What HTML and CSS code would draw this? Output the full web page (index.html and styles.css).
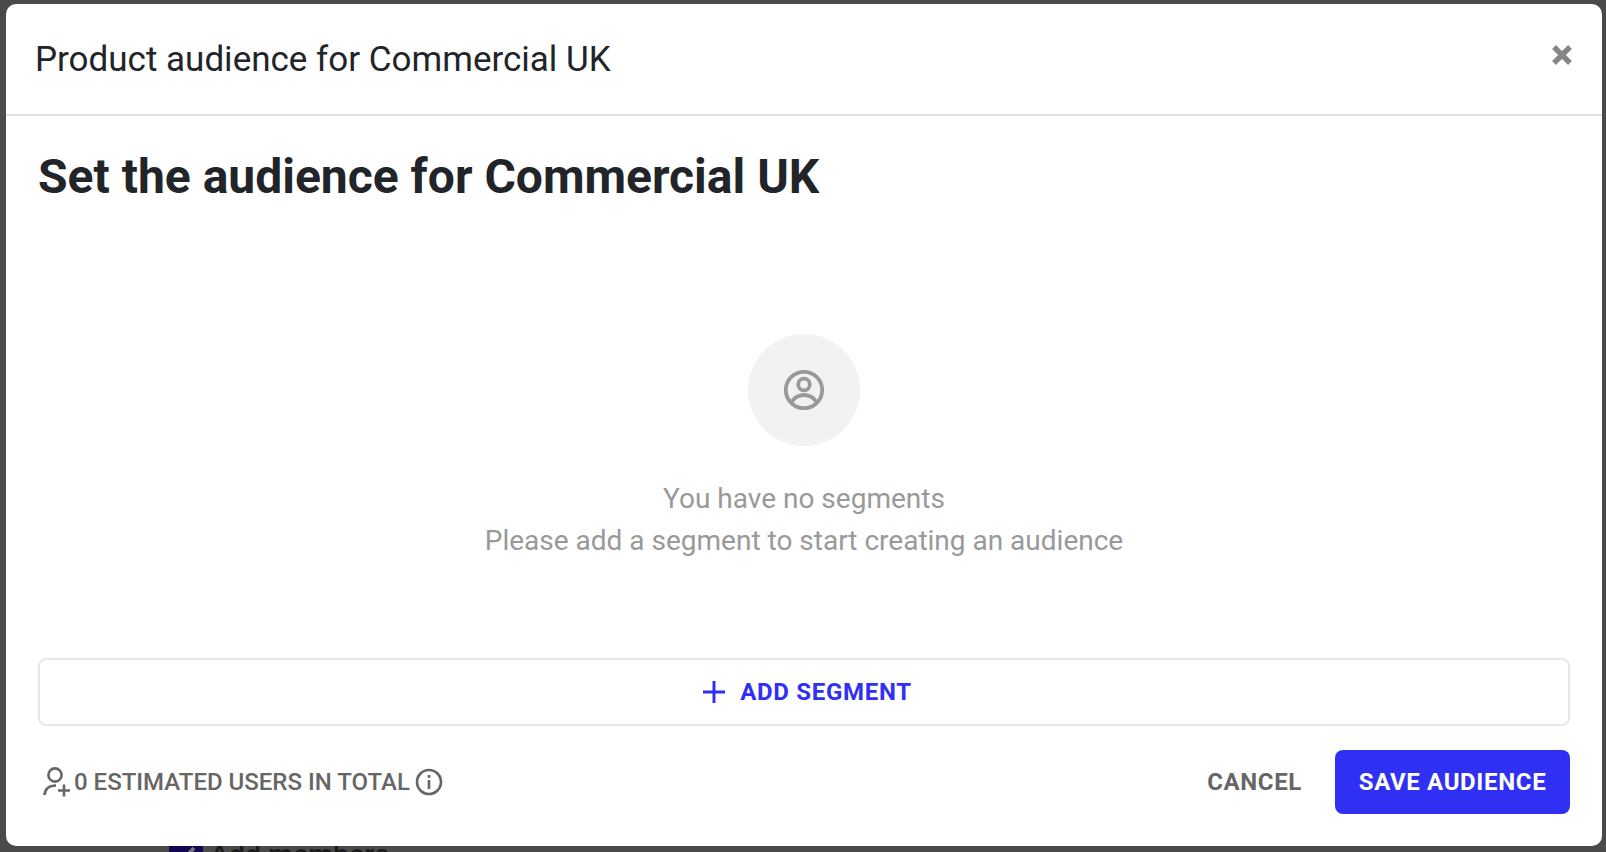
FILE: index.html
```html
<!DOCTYPE html>
<html lang="en">
<head>
    <meta charset="UTF-8">
    <meta name="viewport" content="width=device-width, initial-scale=1.0">
    <link rel="stylesheet" href="styles.css">
    <title>Product audience</title>
</head>
<body>
<div class="modal">
    <div class="modal-header">
        <div class="modal-title">Product audience for Commercial UK</div>
        <svg class="close-icon" width="24" height="24" viewBox="0 0 24 24"><path d="M4 4 L20 20 M20 4 L4 20" stroke="#868686" stroke-width="5.4" fill="none"/></svg>
    </div>
    <div class="modal-body">
        <h1 class="heading">Set the audience for Commercial UK</h1>
        <div class="empty">
            <div class="empty-circle">
                <svg width="42" height="42" viewBox="0 0 42 42" fill="none" stroke="#999" stroke-width="3.8">
                    <circle cx="21" cy="21" r="18.2"/>
                    <circle cx="21" cy="15.5" r="5.8"/>
                    <path d="M8.5 33 C12 27.5 16 26 21 26 C26 26 30 27.5 33.5 33"/>
                </svg>
            </div>
            <p class="empty-text">You have no segments<br>Please add a segment to start creating an audience</p>
        </div>
        <button class="add-segment" type="button">
            <svg width="22" height="22" viewBox="0 0 22 22"><path d="M11 0 V22 M0 11 H22" stroke="#3030f5" stroke-width="3"/></svg>
            ADD SEGMENT
        </button>
        <div class="modal-footer">
            <div class="estimate">
                <svg width="28" height="30" viewBox="0 0 28 30" fill="none" stroke="#666" stroke-width="2.6">
                    <circle cx="12" cy="8" r="6.6"/>
                    <path d="M1.5 28 C2 22 6 18.5 13 18.5"/>
                    <path d="M15 23.5 H27 M21 17.5 V29.5"/>
                </svg>
                <span>0 ESTIMATED USERS IN TOTAL</span>
                <svg class="info-icon" width="28" height="28" viewBox="0 0 28 28" fill="none" stroke="#666" stroke-width="2.6">
                    <circle cx="14" cy="14" r="12"/>
                    <path d="M14 12 V21"/>
                    <path d="M14 7 V9.8" stroke-width="2.8"/>
                </svg>
            </div>
            <div class="actions">
                <button class="btn btn-cancel" type="button">CANCEL</button>
                <button class="btn btn-save" type="button">SAVE AUDIENCE</button>
            </div>
        </div>
    </div>
</div>
<div class="behind">
    <span class="behind-check">
        <svg width="34" height="18" viewBox="0 0 34 18"><path d="M8 8 L14 14 L25 2" stroke="#777" stroke-width="4" fill="none"/></svg>
    </span>
    <span class="behind-label">Add members</span>
</div>
</body>
</html>
```
FILE: styles.css
```css
/* Global */
* {
    box-sizing: border-box;
}

html, body {
    height: 852px;
    overflow: hidden;
}

body {
    margin: 0;
    padding: 4px 4px 0 6px;
    background: #4a4a4a;
    font-family: Roboto, sans-serif;
}

/* Modal */
.modal {
    position: relative;
    z-index: 1;
    display: flex;
    flex-direction: column;
    height: 842px;
    background: #fff;
    border-radius: 10px;
}

.modal-header {
    display: flex;
    align-items: center;
    justify-content: space-between;
    height: 112px;
    padding: 0 28px 0 29px;
    border-bottom: 2px solid #dee2e6;
}

.modal-title {
    font-size: 35px;
    color: #212529;
}

.close-icon {
    margin-bottom: 9px;
}

.modal-body {
    flex: 1;
    display: flex;
    flex-direction: column;
    padding: 0 32px;
}

.heading {
    margin: 31px 0 0;
    font-size: 48px;
    line-height: 60px;
    font-weight: 700;
    color: #212529;
}

/* Empty state */
.empty {
    display: flex;
    flex-direction: column;
    align-items: center;
    margin-top: 127px;
}

.empty-circle {
    display: flex;
    align-items: center;
    justify-content: center;
    width: 112px;
    height: 112px;
    border-radius: 50%;
    background: #f2f2f2;
}

.empty-text {
    margin: 32px 0 0;
    font-size: 28px;
    line-height: 42px;
    text-align: center;
    color: #999;
}

/* Add segment */
.add-segment {
    display: flex;
    align-items: center;
    justify-content: center;
    gap: 15px;
    width: 100%;
    height: 68px;
    margin-top: 96px;
    padding-left: 13px;
    border: 2px solid #e6e6e6;
    border-radius: 8px;
    background: #fff;
    font-family: inherit;
    font-size: 24px;
    font-weight: 700;
    letter-spacing: 0.7px;
    color: #3030f5;
}

/* Footer */
.modal-footer {
    display: flex;
    align-items: center;
    justify-content: space-between;
    margin-top: 24px;
}

.estimate {
    display: flex;
    align-items: center;
    gap: 3px;
    padding-left: 5px;
    font-size: 24px;
    font-weight: 500;
    color: #666;
}

.info-icon {
    margin-left: 2px;
}

.actions {
    display: flex;
    align-items: center;
    gap: 33px;
}

.btn {
    border: 0;
    font-family: inherit;
    font-size: 24px;
    font-weight: 700;
    letter-spacing: 0.65px;
}

.btn-cancel {
    padding: 0;
    background: none;
    color: #666;
}

.btn-save {
    width: 235px;
    height: 64px;
    border-radius: 8px;
    background: #3030f5;
    color: #fff;
}

/* Page behind the modal */
.behind {
    display: flex;
    align-items: flex-start;
    gap: 7px;
    margin-left: 163px;
}

.behind-check {
    display: block;
    width: 34px;
    height: 18px;
    background: #12084f;
}

.behind-label {
    margin-top: -8px;
    font-size: 28.5px;
    font-weight: 500;
    line-height: 34px;
    color: #1c1c1c;
}
```
